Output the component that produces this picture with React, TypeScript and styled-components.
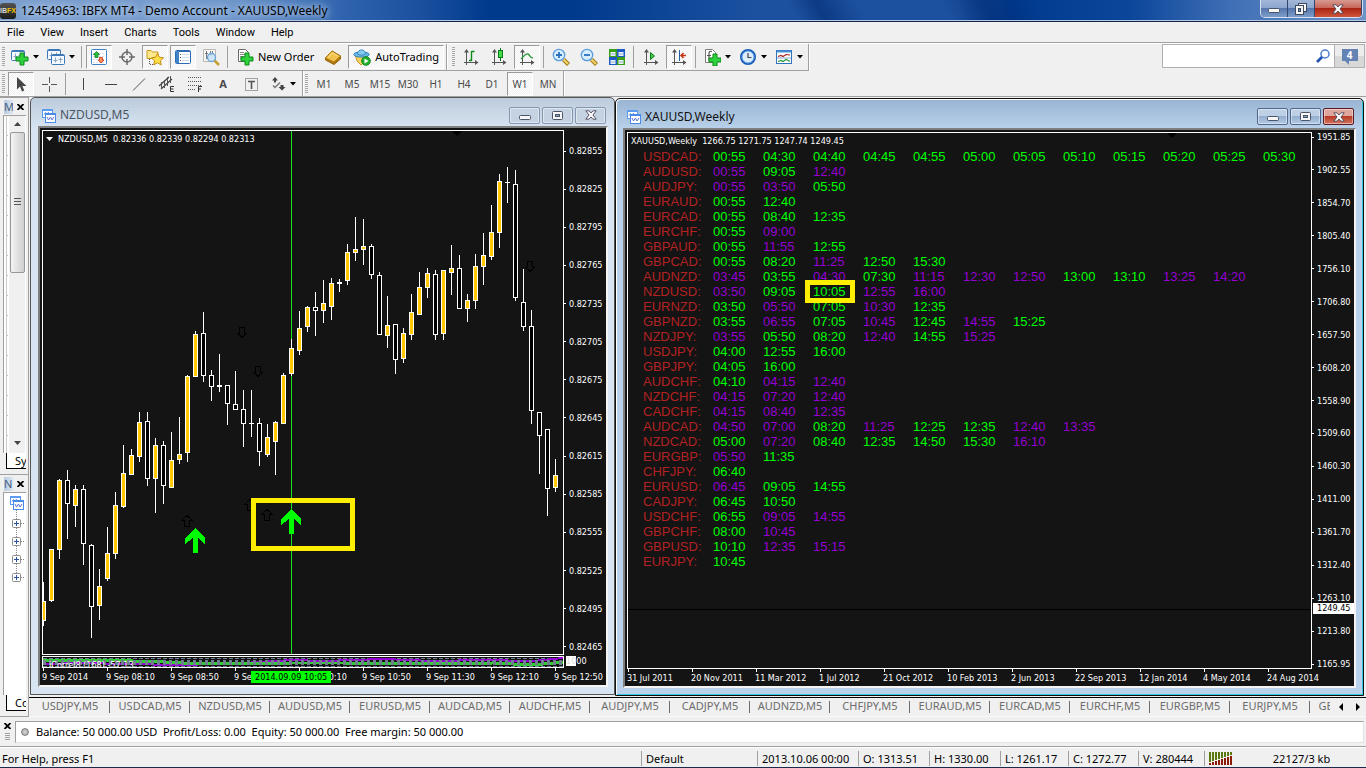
import React from "react";
import styled, { createGlobalStyle, css } from "styled-components";

const UI = `"Noto Sans", "Open Sans", sans-serif`;
const CHART = `"DejaVu Sans Condensed", "DejaVu Sans", sans-serif`;

const Global = createGlobalStyle`
  *, *::before, *::after { box-sizing: border-box; }
  html, body { margin: 0; padding: 0; background: #f0f0f0; overflow: hidden; }
  body { font: 11px/14px ${UI}; color: #000; }
  button { font: inherit; color: inherit; border: 0; background: none; padding: 0; margin: 0; }
  svg { display: block; flex: none; }
`;

const Page = styled.div`
  min-height: 100vh;
  display: flex;
  flex-direction: column;
  overflow: hidden;
`;

/* ---------- title bar and menu ---------- */

const TitleBar = styled.header`
  flex: none;
  height: 22px;
  display: flex;
  align-items: flex-start;
  border-bottom: 1px solid #16264a;
  box-shadow: inset 0 -1px 0 #b4c8e4;
  background:
    linear-gradient(62deg, transparent 58%, rgba(0, 40, 110, 0.55) 60%, transparent 63%, transparent 69%, rgba(0, 40, 110, 0.5) 72%, transparent 76%),
    linear-gradient(90deg, #7b9fce 0, #6f97cb 230px, #2f63ae 345px, #1b509f 420px, #003a8c 490px, #003a8c 570px, #1c51a0 760px, #1c51a0 960px, #003a8e 1010px, #0b469a 1130px, #3f6fb5 1230px, #6c93c8 1366px);
`;
const AppLogo = styled.span`
  flex: none;
  width: 16px;
  height: 16px;
  margin-top: 3px;
  border-radius: 3px;
  background: linear-gradient(#555, #1a1a1a);
  color: #d8d8d8;
  font: bold 7px/15px "Liberation Sans", sans-serif;
  b { color: #f2c400; }
`;
const AppTitle = styled.h1`
  flex: 1;
  margin: 0;
  padding-left: 5px;
  font: 12px/22px ${UI};
  white-space: nowrap;
  text-shadow: 0 0 6px #cfe0f4, 0 0 10px #c3d7f0;
`;
const Caption = styled.div`
  display: flex;
  height: 18px;
  margin-right: 3px;
  border: 1px solid #d5e0f0;
  border-top: 0;
  border-radius: 0 0 5px 5px;
  overflow: hidden;
`;
const CaptionButton = styled.button<{ $close?: boolean }>`
  width: ${(p) => (p.$close ? 47 : 27)}px;
  display: flex;
  align-items: center;
  justify-content: center;
  border-right: 1px solid #33476e;
  background: ${(p) =>
    p.$close
      ? "linear-gradient(#d79a90 0, #c8685a 45%, #a92512 50%, #d0553a)"
      : "linear-gradient(#a3b8d8 0, #8ba6ce 45%, #5577ad 50%, #7d9cc9)"};
`;
const MenuBar = styled.nav`
  flex: none;
  height: 22px;
  display: flex;
  border-bottom: 1px solid #fff;
  box-shadow: inset 0 -1px 0 #a0a0a0;
  font: 11px/20px Roboto, sans-serif;
`;
const MenuItem = styled.button`
  padding: 0 9px 0 7px;
`;

/* ---------- toolbars ---------- */

const ToolRow = styled.div<{ $last?: boolean }>`
  flex: none;
  height: ${(p) => (p.$last ? 26 : 27)}px;
  display: flex;
  ${(p) => p.$last && "border-bottom: 1px solid #a0a0a0;"}
`;
const Group = styled.div<{ $line?: boolean }>`
  display: flex;
  align-items: center;
  padding-right: 1px;
  border-right: 1px solid #a0a0a0;
  box-shadow: 1px 0 0 #fff;
  ${(p) => p.$line && "border-bottom: 1px solid #a0a0a0;"}
`;
const Grip = styled.span<{ $spaced?: boolean }>`
  width: 3px;
  height: 20px;
  margin: 0 2px 0 ${(p) => (p.$spaced ? 5 : 2)}px;
  background: repeating-linear-gradient(#a8a8a8 0 1px, #f0f0f0 1px 2px);
`;
const Divider = styled.span`
  width: 1px;
  height: 22px;
  margin: 0 3px 0 2px;
  background: #a0a0a0;
`;
const Tool = styled.button<{ $on?: boolean; $wide?: boolean; $label?: boolean }>`
  width: ${(p) => (p.$label ? "auto" : p.$wide ? "34px" : "26px")};
  height: 24px;
  margin: 0 1px;
  padding: 0 ${(p) => (p.$label ? 4 : 0)}px;
  display: flex;
  align-items: center;
  justify-content: center;
  gap: 4px;
  color: ${(p) => (p.$label ? "#000" : "#4a4a4a")};
  ${(p) =>
    p.$on &&
    css`
      border: 1px solid;
      border-color: #9a9a9a #fff #fff #9a9a9a;
      background: conic-gradient(#fff 25%, #f0f0f0 0 50%, #fff 0 75%, #f0f0f0 0) 0 0 / 2px 2px;
    `}
`;
const Period = styled(Tool)`
  font: 10px/14px ${UI};
`;
const Search = styled.div`
  display: flex;
  width: 203px;
  height: 24px;
  margin: 0 1px 0 auto;
  border: 1px solid #b0b0b0;
  background: #fff;
  align-items: center;
`;
const SearchInput = styled.input`
  flex: 1;
  min-width: 0;
  height: 22px;
  border: 0;
  outline: 0;
  background: none;
`;
const Messages = styled.button`
  width: 30px;
  height: 22px;
  margin-left: 4px;
  border-left: 1px solid #b0b0b0;
  background: linear-gradient(#ececec 50%, #d8d8d8 50%);
  display: flex;
  align-items: center;
  justify-content: center;
`;
const MessageCount = styled.span`
  position: relative;
  width: 16px;
  height: 12px;
  margin-bottom: 2px;
  background: #6482b4;
  color: #fff;
  font: bold 10px/12px ${UI};
  &::after {
    content: "";
    position: absolute;
    left: 3px;
    top: 12px;
    border: 2px solid transparent;
    border-top-color: #6482b4;
    border-right-color: #6482b4;
  }
`;

/* ---------- docked panels ---------- */

const Main = styled.main`
  flex: 1;
  display: grid;
  grid-template-columns: 29px minmax(0, 1fr);
  min-height: 0;
`;
const Docks = styled.aside`
  display: flex;
  flex-direction: column;
  border-right: 1px solid #a0a0a0;
  border-bottom: 1px solid #a0a0a0;
`;
const Dock = styled.section<{ $grow?: boolean }>`
  display: flex;
  flex-direction: column;
  flex: ${(p) => (p.$grow ? "379 0 0" : "241 0 0")};
  min-height: 0;
  padding: 0 2px 5px 3px;
  border-top: 1px solid #a0a0a0;
`;
const DockHead = styled.div`
  display: flex;
  align-items: center;
  justify-content: space-between;
  height: 17px;
  padding: 0 2px 0 1px;
  color: #44607e;
  span { background: linear-gradient(90deg, #b9cbe0, #dce6f2); width: 9px; overflow: hidden; }
`;
const DockBody = styled.div`
  flex: 1;
  min-height: 0;
  display: flex;
  border: 1px solid #a0a0a0;
  border-right: 0;
  border-bottom: 0;
  background: #fff;
`;
const RowMarks = styled.div`
  width: 4px;
  margin-right: 1px;
  border-left: 2px solid #fff;
  box-shadow: inset 1px 0 0 #c8c8c8;
  background: repeating-linear-gradient(#fff 0 19px, #c0c0c0 19px 20px);
`;
const ScrollBar = styled.div`
  width: 16px;
  display: flex;
  flex-direction: column;
  align-items: center;
  background: #f0f0f0;
  padding: 6px 0 8px;
`;
const Thumb = styled.div`
  width: 15px;
  height: 141px;
  margin: 6px 0 auto;
  display: flex;
  align-items: center;
  justify-content: center;
  border: 1px solid #979797;
  border-radius: 2px;
  background: linear-gradient(90deg, #f4f4f4, #ddd 60%, #cfcfd2);
`;
const DockTab = styled.button`
  height: 16px;
  margin-left: 3px;
  padding-left: 8px;
  text-align: left;
  overflow: hidden;
  white-space: nowrap;
  border: solid #000;
  border-width: 0 0 1px 1px;
  background: #fff;
`;
const Tree = styled.div`
  flex: 1;
  display: flex;
  flex-direction: column;
  align-items: center;
  padding: 2px 0 0 3px;
`;

/* ---------- chart windows ---------- */

const Workspace = styled.div`
  display: flex;
  flex-direction: column;
  min-width: 0;
`;
const Windows = styled.div`
  flex: 1;
  display: grid;
  grid-template-columns: minmax(0, 585fr) minmax(0, 749fr);
  padding: 0 2px 0 1px;
`;
const Win = styled.section<{ $active?: boolean }>`
  display: flex;
  flex-direction: column;
  min-width: 0;
  border: 1px solid ${(p) => (p.$active ? "#111" : "#555")};
  border-radius: 5px 5px 0 0;
  ${(p) =>
    p.$active
      ? css`
          margin: 1px 0;
          padding: 0 7px 7px;
          background: linear-gradient(#98b4d2, #b9d1ea 30px);
          box-shadow: inset 1px 1px 0 #fff, inset -1px -1px 0 #35c8e0;
        `
      : css`
          margin: 0 0 2px;
          padding: 0 6px 7px 7px;
          background: linear-gradient(#bccbda, #d7e4f2 30px);
        `}
`;
const WinTitle = styled.header<{ $active?: boolean }>`
  flex: none;
  height: ${(p) => (p.$active ? 29 : 28)}px;
  display: flex;
  align-items: center;
  gap: 4px;
  padding: 6px 2px 0 3px;
  color: ${(p) => (p.$active ? "#111" : "#4a5563")};
  h2 { flex: 1; margin: 0; font: 12px/20px ${UI}; }
`;
const Buttons = styled.div`
  display: flex;
  gap: 2px;
`;
const WinButton = styled.button<{ $active?: boolean; $close?: boolean }>`
  width: 31px;
  height: 17px;
  display: flex;
  align-items: center;
  justify-content: center;
  border: 1px solid ${(p) => (p.$active && p.$close ? "#5a1a22" : p.$active ? "#51688c" : "#8496b0")};
  border-radius: 2px;
  box-shadow: inset 0 0 0 1px rgba(255, 255, 255, 0.45);
  background: ${(p) =>
    !p.$active
      ? "#c4d2e1"
      : p.$close
        ? "linear-gradient(#e0a59c 48%, #b83a26 50%, #d2755f)"
        : "linear-gradient(#bdd0e6 48%, #94afcf 50%, #b2cae4)"};
`;
const Frame = styled.div<{ $sub?: boolean }>`
  flex: 1;
  display: grid;
  grid-template-columns: minmax(0, 1fr) 42px;
  grid-template-rows: ${(p) => (p.$sub ? "minmax(0, 1fr) 13px 17px" : "minmax(0, 1fr) 17px")};
  border: 2px solid;
  border-color: #7f7f7f #f4f4f4 #f4f4f4 #7f7f7f;
  padding: 2px 0 0 2px;
  background: #141414;
  color: #fff;
  font: 9px/10px ${CHART};
`;
const Plot = styled.div`
  position: relative;
  border: 1px solid #fff;
  overflow: hidden;
`;
const Indicator = styled(Plot)`
  margin-top: 1px;
`;
const Ohlc = styled.p`
  position: absolute;
  top: 3px;
  left: 3px;
  margin: 0;
  display: flex;
  align-items: center;
  gap: 5px;
  white-space: pre;
`;
const Scale = styled.div<{ $inset?: boolean }>`
  position: relative;
  display: flex;
  flex-direction: column;
  justify-content: space-between;
  ${(p) => p.$inset && "padding: 16px 0 3px;"}
`;
const Price = styled.span`
  display: flex;
  align-items: center;
  gap: 3px;
  height: 10px;
  &::before { content: ""; width: 2px; height: 1px; background: #fff; }
`;
const LastPrice = styled.span`
  position: absolute;
  top: 471px;
  left: 1px;
  width: 41px;
  padding-left: 4px;
  line-height: 11px;
  background: #fff;
  color: #000;
`;
const SubScale = styled.div`
  padding: 1px 0 0 2px;
  b { background: #fff; color: #ddd; font-weight: normal; }
`;
const Times = styled.div`
  grid-column: 1 / -1;
  position: relative;
  display: flex;
`;
const Time = styled.span`
  position: relative;
  flex: 0 0 64px;
  padding-top: 4px;
  white-space: nowrap;
  &::before {
    content: "";
    position: absolute;
    left: 1px;
    top: 0;
    width: 1px;
    height: 3px;
    background: #fff;
  }
`;
const CursorTime = styled.span`
  position: absolute;
  left: 209px;
  top: 3px;
  width: 80px;
  line-height: 12px;
  padding-left: 4px;
  white-space: nowrap;
  background: #0f0;
  color: #000;
`;
const Signals = styled.table`
  margin: 16px 0 0 15px;
  border-collapse: collapse;
  table-layout: fixed;
  width: 670px;
  font: 13px/15px "Liberation Sans", Arial, sans-serif;
  th { width: 70px; font-weight: normal; text-align: left; color: #b22222; }
  th, td { padding: 0; height: 15px; white-space: nowrap; }
`;
const SignalTime = styled.td<{ $up: boolean }>`
  color: ${(p) => (p.$up ? "#0f0" : "#9400d3")};
`;
const Mark = styled.span`
  position: relative;
  &::after {
    content: "";
    position: absolute;
    inset: -4px -9px -4px -8px;
    border: 5px solid #fe0;
  }
`;
const BidLine = styled.span`
  position: absolute;
  left: 0;
  right: 0;
  top: 476px;
  height: 1px;
  background: #000;
`;
const TopMarker = styled.span<{ $x: string }>`
  position: absolute;
  top: 0;
  left: ${(p) => p.$x};
  border: 5px solid transparent;
  border-top-color: #000;
  border-bottom: 0;
`;

/* ---------- bottom ---------- */

const Tabs = styled.nav`
  flex: none;
  height: 20px;
  display: flex;
  border-top: 1px solid #000;
  border-bottom: 1px solid #fafafa;
  color: #6d6d6d;
`;
const TabStrip = styled.div`
  flex: 1;
  min-width: 0;
  display: flex;
  margin: 0 2px 0 1px;
  overflow: hidden;
`;
const Tab = styled.button`
  flex: 0 0 80px;
  height: 16px;
  position: relative;
  white-space: nowrap;
  &::after {
    content: "";
    position: absolute;
    right: 0;
    top: 3px;
    height: 12px;
    width: 1px;
    background: #6d6d6d;
  }
`;
const TabArrow = styled.button`
  width: 17px;
  height: 17px;
  display: flex;
  align-items: center;
  justify-content: center;
`;
const Account = styled.section`
  flex: none;
  height: 30px;
  display: flex;
  gap: 3px;
  padding: 4px 2px 3px 3px;
  border-bottom: 1px solid #a0a0a0;
`;
const AccountSide = styled.div`
  width: 9px;
  display: flex;
  flex-direction: column;
  align-items: center;
  gap: 4px;
  padding-top: 2px;
`;
const AccountBox = styled.div`
  flex: 1;
  display: flex;
  align-items: center;
  gap: 7px;
  padding-left: 5px;
  border: 1px solid #a0a0a0;
  border-right-color: #e3e3e3;
  border-bottom-color: #e3e3e3;
  background: #fff;
  white-space: pre;
`;
const Dot = styled.span`
  width: 8px;
  height: 8px;
  border-radius: 4px;
  border: 1px solid #808080;
  background: radial-gradient(circle at 3px 3px, #d8d8d8, #9c9c9c);
`;
const Status = styled.footer`
  flex: none;
  height: 21px;
  display: flex;
  border-top: 1px solid #fff;
  border-bottom: 1px solid #1c2b4c;
  font: 11px/20px ${UI};
  white-space: nowrap;
`;
const Cell = styled.span<{ $w?: number }>`
  ${(p) => (p.$w ? `flex: 0 0 ${p.$w}px;` : "flex: 1; min-width: 0;")}
  display: flex;
  align-items: center;
  position: relative;
  padding: 2px 0 0 ${(p) => (p.$w ? 5 : 2)}px;
  ${(p) =>
    p.$w &&
    css`
      &::before {
        content: "";
        position: absolute;
        left: 0;
        top: 3px;
        bottom: 1px;
        width: 1px;
        background: #a0a0a0;
      }
    `}
`;
const Traffic = styled.span`
  flex: 1;
  text-align: center;
  padding-left: 4px;
`;

/* ---------- icons ---------- */

const Svg = ({ w = 18, h = 18, children }: { w?: number; h?: number; children: React.ReactNode }) => (
  <svg width={w} height={h} viewBox={`0 0 ${w} ${h}`} fill="none" aria-hidden="true">
    {children}
  </svg>
);
const Caret = () => <Svg w={6} h={4}><path d="M0 0h6L3 3.5z" fill="#000" /></Svg>;
const Plus = ({ x, y }: { x: number; y: number }) => (
  <path transform={`translate(${x} ${y})`} d="M4 0h4v4h4v4H8v4H4V8H0V4h4z" fill="#2fd23c" stroke="#0a8a18" />
);
const ChartFrame = ({ x, y }: { x: number; y: number }) => (
  <g transform={`translate(${x} ${y})`}>
    <rect x=".5" y=".5" width="13" height="10" rx="1" fill="#f4faff" stroke="#3c78b8" />
    <path d="M1 1.500h12" stroke="#3c78b8" />
    <path d="M4.500 3.500v5M2.500 6.500h4M9.500 3.500v5M7.500 5.500h4" stroke="#8aa4c0" />
  </g>
);
const Axes = () => (
  <g>
    <path d="M4.500 3v14M2 14.500h12" stroke="#555" />
    <path d="M2 4.500L4.500 1 7 4.500zM13 12l3.500 2.500L13 17z" fill="#555" />
  </g>
);
const WinIcon = () => (
  <Svg w={15} h={15}>
    <rect x="1.500" y="1.500" width="10" height="8" fill="#fff" stroke="#5c9cf0" />
    <path d="M1 2.500h11" stroke="#5c9cf0" />
    <path d="M3 6.500l1.500-2L6 7l1.500-3" stroke="#4f8fe0" />
    <rect x="4.500" y="5.500" width="10" height="9" fill="#fff" stroke="#4a8ae8" />
    <path d="M4 6.500h11" stroke="#4a8ae8" />
    <path d="M6 9l1.500 3L9.500 9l1.500 3L13 9" stroke="#5a74d8" />
  </Svg>
);
const CrossIcon = () => <Svg w={7} h={6}><path d="M.5 0L6.500 6M6.500 0L.5 6" stroke="#000" strokeWidth="1.800" /></Svg>;
const MinGlyph = () => <Svg w={12} h={9}><rect x=".5" y="4.500" width="11" height="4" rx="1" fill="#f6f6f6" stroke="#4a5468" /></Svg>;
const MaxGlyph = () => (
  <Svg w={11} h={9}>
    <rect x=".5" y=".5" width="10" height="8" rx="1" fill="#f6f6f6" stroke="#4a5468" />
    <rect x="3.500" y="3.500" width="4" height="2" fill="#8aa0bc" stroke="#4a5468" />
  </Svg>
);
const RestoreGlyph = () => (
  <Svg w={12} h={12}>
    <rect x="3.500" y=".5" width="8" height="8" fill="#f6f6f6" stroke="#3e4a60" />
    <rect x=".5" y="2.500" width="8" height="9" fill="#f6f6f6" stroke="#3e4a60" />
    <rect x="3.500" y="5.500" width="2" height="3" fill="#6d8ab5" stroke="#3e4a60" />
  </Svg>
);
const CloseGlyph = () => (
  <Svg w={12} h={10}>
    <path d="M.8.8h3.200L6 3 8 .8h3.200L8 5l3.200 4.200H8L6 7 4 9.200H.8L4 5z" fill="#f8f8f8" stroke="#4a4658" strokeWidth=".9" />
  </Svg>
);
const Magnifier = ({ sign }: { sign: string }) => (
  <Svg>
    <path d="M11.500 11.500l5 5" stroke="#9a7410" strokeWidth="4" />
    <path d="M11.500 11.500l4.500 4.500" stroke="#f2d468" strokeWidth="2.200" />
    <circle cx="7" cy="7" r="5.700" fill="#d6eefe" stroke="#5a9cdc" strokeWidth="1.300" />
    <path d={sign} stroke="#2c6fbe" strokeWidth="1.800" />
  </Svg>
);

const icons = {
  newChart: <Svg><ChartFrame x={0} y={2} /><Plus x={5} y={5} /></Svg>,
  profiles: <Svg><ChartFrame x={0} y={1} /><ChartFrame x={4} y={6} /></Svg>,
  market: (
    <Svg>
      <rect x="1.500" y="1.500" width="15" height="15" rx="1" fill="#fff" stroke="#3f82c8" />
      <path d="M3 5.500h12M3 8.500h12M3 11.500h12M3 14.500h12" stroke="#d4e0ec" strokeDasharray="2 1" />
      <path d="M3.500 6.500L6.500 3.500 9.500 6.500H8v3H5v-3z" fill="#30c040" stroke="#0c7c1c" strokeWidth=".8" />
      <path d="M8 12l3 3 3-3h-1.500V9.500h-3V12z" fill="#ff8a60" stroke="#c83818" strokeWidth=".8" />
    </Svg>
  ),
  data: (
    <Svg>
      <circle cx="9" cy="9" r="5" stroke="#6a6a6a" strokeWidth="1.500" />
      <path d="M9 1v6M9 11v6M1 9h6M11 9h6" stroke="#6a6a6a" strokeWidth="1.500" />
    </Svg>
  ),
  navigator: (
    <Svg>
      <path d="M1 2.500h4l1.500 1.500H12v6.500H1z" fill="#ffe98a" stroke="#c8981c" />
      <path d="M3.500 11v5.500H7" stroke="#555" strokeDasharray="1 1" />
      <path d="M11.500 5.500l1.900 3.700 4.100.6-3 2.900.7 4.100-3.700-2-3.700 2 .7-4.100-3-2.900 4.100-.6z" fill="#ffdf45" stroke="#c08a10" />
    </Svg>
  ),
  terminal: (
    <Svg>
      <rect x="1.500" y="2.500" width="15" height="13" rx="1" fill="#fff" stroke="#2d6cb4" />
      <path d="M2 3h3v12H2z" fill="#3e82c8" />
      <path d="M5 3.500h11" stroke="#2d6cb4" />
      <path d="M8 6.500h7M8 9.500h7M8 12.500h7" stroke="#d0dcea" />
      <path d="M6 6.500h1M6 9.500h1M6 12.500h1" stroke="#555" />
    </Svg>
  ),
  tester: (
    <Svg>
      <path d="M1.500 1.500h12v12h-12z" fill="#f7f7f7" stroke="#b8b8b0" />
      <path d="M4.500 3v8M8.500 3v5M3 5.500h3M10.500 3v3" stroke="#777" />
      <path d="M12.500 12.500l4.500 4.500" stroke="#c8a030" strokeWidth="2.500" />
      <circle cx="9.500" cy="9.500" r="4" fill="#c4e2f8" fillOpacity=".85" stroke="#6ca4d8" strokeWidth="1.300" />
    </Svg>
  ),
  order: (
    <Svg>
      <path d="M2.500 1.500h7l3 3v9h-10z" fill="#fff" stroke="#6a6a6a" />
      <path d="M4 4.500h4M4 6.500h6M4 8.500h4M4 10.500h3" stroke="#888" />
      <Plus x={5} y={5} />
    </Svg>
  ),
  book: (
    <Svg>
      <path d="M1.500 10L8 3l8.500 5v3L10 16.500 1.500 12z" fill="#b07810" stroke="#966408" />
      <path d="M1.500 10L8 3l8.500 5-6.500 6z" fill="#f2c24a" stroke="#b07c14" />
      <path d="M4.500 9L8.500 5l5 3" stroke="#fde8a0" />
    </Svg>
  ),
  auto: (
    <Svg>
      <path d="M2.500 8h12l-1.500 5-5 4-4-4z" fill="#f6d060" stroke="#c49a24" />
      <ellipse cx="8.500" cy="6.500" rx="7.800" ry="2.600" fill="#6cb8e8" stroke="#2e80b8" />
      <path d="M4.500 6c0-5.500 8-5.500 8 0-2 1.500-6 1.500-8 0z" fill="#86caf2" stroke="#3a8cc4" />
      <circle cx="13" cy="13" r="4.300" fill="#22b030" stroke="#0f8d1c" />
      <path d="M11.500 10.500l4 2.500-4 2.500z" fill="#fff" />
    </Svg>
  ),
  bars: <Svg><Axes /><path d="M9.500 3v10M12.500 3.500h-3M9.500 12.500H7" stroke="#0a8a1a" strokeWidth="1.400" /></Svg>,
  candles: (
    <Svg>
      <Axes />
      <path d="M10.500 0v13" stroke="#0a7a18" />
      <rect x="8.500" y="2.500" width="4" height="7" fill="#3fdc4c" stroke="#0a7a18" />
    </Svg>
  ),
  line: <Svg><Axes /><path d="M3 11c3-3 5-6 7-5s2 4 5 4" stroke="#2a9a3a" strokeWidth="1.400" /></Svg>,
  zoomIn: <Magnifier sign="M4 7h6M7 4v6" />,
  zoomOut: <Magnifier sign="M4 7h6" />,
  tile: (
    <Svg>
      <path d="M1 1h8v8H1zM9 9h8v8H9z" fill="#38a018" />
      <path d="M9 1h8v8H9zM1 9h8v8H1z" fill="#2058c8" />
      <path d="M2.500 4h5v4h-5zM10.500 4h5v4h-5zM2.500 12h5v4h-5zM10.500 12h5v4h-5z" fill="#e8f2fc" />
      <path d="M3 6h4M11 6h4M3 14h4M11 14h4" stroke="#98b0d0" />
    </Svg>
  ),
  scroll: <Svg><Axes /><path d="M8.500 4.500v7L12.500 8z" fill="#3fcc4c" stroke="#0a7a18" /></Svg>,
  shift: (
    <Svg>
      <Axes />
      <path d="M9.500 2v11" stroke="#2060a0" />
      <path d="M16 7.500h-5M13.500 5L11 7.500l2.500 2.500" stroke="#c83010" strokeWidth="1.500" />
    </Svg>
  ),
  indicators: (
    <Svg>
      <path d="M2.500 1.500h7l3 3v10h-10z" fill="#fff" stroke="#7a7a7a" />
      <path d="M9 3.500c-3-1-3 1-3 3v6M4 7.500h4" stroke="#555" strokeWidth="1.200" />
      <Plus x={6} y={6} />
    </Svg>
  ),
  clock: (
    <Svg>
      <circle cx="9" cy="9" r="7" fill="#dcecfa" stroke="#1a5cb4" strokeWidth="2" />
      <circle cx="9" cy="9" r="6" stroke="#5aa4ec" />
      <path d="M9 5v4.500h3.500" stroke="#444" strokeWidth="1.200" />
    </Svg>
  ),
  template: (
    <Svg>
      <rect x="1.500" y="2.500" width="15" height="13" fill="#fff" stroke="#2f74bc" />
      <path d="M2 3.500h14" stroke="#4a90d8" strokeWidth="2" />
      <path d="M3 8.500l3-1 2 1 3-2 4 .500" stroke="#a82020" strokeWidth="1.200" />
      <path d="M2 10h14" stroke="#88a8c8" />
      <path d="M3 13.500l3-1 2 1 3-2 4 2" stroke="#2a9a3a" strokeWidth="1.200" />
    </Svg>
  ),
  cursor: <Svg><path d="M5 2v12.500l3-3 2 5 2.300-1L10.300 11h4.200z" fill="#454545" /></Svg>,
  cross: <Svg><path d="M9.500 2v6M9.500 11v6M2 9.500h6M11 9.500h6" stroke="#555" /></Svg>,
  vline: <Svg><path d="M9.500 3v12" stroke="#444" /></Svg>,
  hline: <Svg><path d="M3 9.500h12" stroke="#444" /></Svg>,
  trend: <Svg><path d="M3 15.500L15 3.500" stroke="#555" /></Svg>,
  channel: (
    <Svg>
      <path d="M1 11L11 2M3 14L14 4" stroke="#444" strokeWidth="1.200" />
      <path d="M3.500 14V7M6.500 13V5M9.500 11V2M12.500 8V1" stroke="#555" />
      <path d="M16 11.500h-3.500v5H16M12 14h3.500" stroke="#333" />
    </Svg>
  ),
  fibo: (
    <Svg>
      <path d="M2 2.500h14M2 6.500h14M2 10.500h14M2 14.500h8" stroke="#555" strokeDasharray="1 1" />
      <path d="M12.500 17v-5.500H16M12.500 14H15" stroke="#333" />
    </Svg>
  ),
  textBox: (
    <Svg>
      <rect x="3.500" y="3.500" width="12" height="12" stroke="#555" strokeDasharray="1 1" />
      <path d="M6 6.500h7M9.500 6v8" stroke="#555" strokeWidth="1.600" />
    </Svg>
  ),
  arrows: (
    <Svg w={15} h={14}>
      <path d="M4 0l3 3.500h-2v2H3v-2H1z" fill="#444" />
      <path d="M2 8.500l2 2 5-5" stroke="#777" strokeWidth="1.500" />
      <path d="M11 13.500L7.500 10h2V8h3v2h2z" fill="#444" />
    </Svg>
  ),
};

/* ---------- data ---------- */

type Candle = [kind: "u" | "d", high: number, top: number, bottom: number, low: number];

const candles: Candle[] = [
  ["u", 582, 601, 621, 626], ["u", 549, 549, 601, 602], ["u", 479, 480, 550, 559], ["d", 470, 480, 504, 539],
  ["u", 485, 489, 506, 527], ["d", 485, 489, 544, 565], ["d", 544, 545, 607, 638], ["u", 569, 586, 606, 620],
  ["u", 527, 553, 579, 581], ["u", 492, 505, 554, 559], ["u", 445, 473, 507, 508], ["u", 449, 455, 475, 475],
  ["u", 412, 422, 457, 462], ["d", 412, 421, 479, 486], ["u", 438, 445, 479, 513], ["d", 441, 445, 486, 504],
  ["u", 432, 460, 488, 488], ["u", 417, 454, 460, 464], ["u", 375, 376, 453, 462], ["u", 331, 334, 377, 377],
  ["d", 312, 333, 376, 382], ["d", 370, 375, 387, 401], ["d", 354, 385, 387, 392], ["d", 385, 385, 404, 425],
  ["d", 371, 404, 410, 410], ["d", 390, 409, 424, 447], ["d", 390, 423, 424, 437], ["d", 418, 423, 452, 466],
  ["u", 424, 437, 455, 457], ["u", 421, 422, 442, 475], ["u", 373, 375, 424, 424], ["u", 339, 348, 374, 376],
  ["u", 311, 328, 351, 355], ["u", 306, 307, 327, 332], ["d", 292, 307, 311, 336], ["u", 280, 303, 311, 323],
  ["u", 278, 283, 307, 320], ["d", 279, 282, 284, 292], ["u", 244, 252, 281, 285], ["u", 217, 249, 253, 261],
  ["u", 219, 246, 250, 265], ["d", 244, 246, 275, 279], ["d", 272, 275, 335, 335], ["u", 296, 325, 336, 348],
  ["d", 324, 324, 360, 374], ["u", 328, 333, 359, 363], ["u", 294, 312, 335, 340], ["u", 272, 287, 315, 315],
  ["u", 268, 273, 288, 298], ["d", 270, 274, 335, 340], ["u", 270, 270, 334, 340], ["u", 245, 268, 273, 295],
  ["d", 255, 268, 309, 309], ["u", 294, 300, 309, 322], ["u", 254, 266, 301, 309], ["u", 233, 255, 267, 285],
  ["u", 205, 232, 257, 260], ["u", 174, 181, 233, 248], ["d", 167, 182, 183, 203], ["d", 170, 184, 298, 301],
  ["d", 269, 302, 327, 331], ["d", 310, 326, 411, 424], ["d", 412, 412, 436, 474], ["d", 429, 429, 489, 516],
  ["u", 459, 475, 488, 492],
];

const leftPrices = ["0.82855", "0.82825", "0.82795", "0.82765", "0.82735", "0.82705", "0.82675", "0.82645", "0.82615", "0.82585", "0.82555", "0.82525", "0.82495", "0.82465"];
const leftTimes = ["9 Sep 2014", "9 Sep 08:10", "9 Sep 08:50", "9 Sep 09:30", "9 Sep 10:10", "9 Sep 10:50", "9 Sep 11:30", "9 Sep 12:10", "9 Sep 12:50"];
const rightPrices = ["1951.85", "1902.55", "1854.70", "1805.40", "1756.10", "1706.80", "1657.50", "1608.20", "1558.90", "1509.60", "1460.30", "1411.00", "1361.70", "1312.40", "1263.10", "1213.80", "1165.95"];
const rightTimes = ["31 Jul 2011", "20 Nov 2011", "11 Mar 2012", "1 Jul 2012", "21 Oct 2012", "10 Feb 2013", "2 Jun 2013", "22 Sep 2013", "12 Jan 2014", "4 May 2014", "24 Aug 2014"];

/* A leading "+" marks a buy signal, a leading "-" a sell signal. */
const signals: [string, string][] = [
  ["USDCAD", "+00:55 +04:30 +04:40 +04:45 +04:55 +05:00 +05:05 +05:10 +05:15 +05:20 +05:25 +05:30"],
  ["AUDUSD", "-00:55 +09:05 -12:40"],
  ["AUDJPY", "-00:55 -03:50 +05:50"],
  ["EURAUD", "+00:55 +12:40"],
  ["EURCAD", "+00:55 +08:40 +12:35"],
  ["EURCHF", "+00:55 -09:00"],
  ["GBPAUD", "+00:55 -11:55 +12:55"],
  ["GBPCAD", "+00:55 +08:20 -11:25 +12:50 +15:30"],
  ["AUDNZD", "-03:45 +03:55 -04:30 +07:30 -11:15 -12:30 -12:50 +13:00 +13:10 -13:25 -14:20"],
  ["NZDUSD", "-03:50 +09:05 +10:05 -12:55 -16:00"],
  ["EURNZD", "+03:50 -05:50 +07:05 -10:30 +12:35"],
  ["GBPNZD", "+03:55 -06:55 +07:05 -10:45 +12:45 -14:55 +15:25"],
  ["NZDJPY", "-03:55 +05:50 +08:20 -12:40 +14:55 -15:25"],
  ["USDJPY", "+04:00 +12:55 +16:00"],
  ["GBPJPY", "+04:05 +16:00"],
  ["AUDCHF", "+04:10 -04:15 -12:40"],
  ["NZDCHF", "-04:15 -07:20 -12:40"],
  ["CADCHF", "-04:15 -08:40 -12:35"],
  ["AUDCAD", "-04:50 -07:00 +08:20 -11:25 +12:25 +12:35 -12:40 -13:35"],
  ["NZDCAD", "+05:00 -07:20 +08:40 +12:35 +14:50 +15:30 -16:10"],
  ["EURGBP", "-05:50 +11:35"],
  ["CHFJPY", "+06:40"],
  ["EURUSD", "-06:45 +09:05 +14:55"],
  ["CADJPY", "+06:45 +10:50"],
  ["USDCHF", "+06:55 -09:05 -14:55"],
  ["GBPCHF", "+08:00 -10:45"],
  ["GBPUSD", "+10:10 -12:35 -15:15"],
  ["EURJPY", "+10:45"],
];
const tabs = ["USDJPY", "USDCAD", "NZDUSD", "AUDUSD", "EURUSD", "AUDCAD", "AUDCHF", "AUDJPY", "CADJPY", "AUDNZD", "CHFJPY", "EURAUD", "EURCAD", "EURCHF", "EURGBP", "EURJPY", "GBPAUD"];

/* ---------- parts ---------- */

const Ghost = ({ x, y, up }: { x: number; y: number; up?: boolean }) => (
  <path
    transform={`translate(${x} ${y})${up ? " scale(1 -1)" : ""}`}
    d="M-2.500-5h5v6h2.500L0 5.500-5 1h2.500z"
    stroke="#000"
    fill="none"
  />
);
const BuyArrow = ({ x, y }: { x: number; y: number }) => (
  <path transform={`translate(${x} ${y})`} d="M0 0L10 10v6L3 10V25h-5V10l-8 6v-6z" fill="#0f0" />
);

const CandleChart = () => (
  <svg width="520" height="523" viewBox="43 131 520 523" fill="none" shapeRendering="crispEdges" role="img" aria-label="NZDUSD candles">
    <path d="M291.500 131v523" stroke="#1ee01e" />
    <Ghost x={242} y={332} />
    <Ghost x={258} y={371} />
    <Ghost x={530} y={266} />
    <Ghost x={187} y={521} up />
    <Ghost x={250} y={505} up />
    <Ghost x={267} y={515} up />
    {candles.map(([kind, high, top, bottom, low], i) => {
      const x = 43 + i * 8;
      return (
        <g key={i}>
          <rect x={x} y={high} width={1} height={low - high} fill="#fff" />
          <rect x={x - 2} y={top} width={5} height={bottom - top} fill="#fff" />
          {bottom - top > 2 && (
            <rect x={x - 1} y={top + 1} width={3} height={bottom - top - 2} fill={kind === "u" ? "#ffc800" : "#000"} />
          )}
        </g>
      );
    })}
    <BuyArrow x={195} y={528} />
    <BuyArrow x={291} y={509} />
    <rect x="253.500" y="500.500" width="99" height="48" stroke="#fe0" strokeWidth="5" />
  </svg>
);

const IndicatorChart = () => (
  <svg width="520" height="10" viewBox="0 0 520 10" fill="none" shapeRendering="crispEdges">
    <path d="M0 1.500h520M0 9.500h520" stroke="#708090" strokeDasharray="4 2" />
    <path d="M0 7l40-1 40 1 60 1 60-2 50-3 30 1 60-2 50 2 50-1 50 1 30-3 20 4 20 2" stroke="#9400d3" strokeWidth="2" />
    <path d="M0 3l60 0 60 2 40 2 90-1 50 0 90 1 60-1 40 2 30-3h12" stroke="#32cd32" strokeWidth="3" />
    <path d="M0 5h520" stroke="#708090" strokeWidth="5" strokeDasharray="3 3" />
    <text x="6" y="11" fill="#fff" fontSize="9" fontFamily="DejaVu Sans Condensed, DejaVu Sans, sans-serif">
      iCorrel8 (168) -57.13
    </text>
  </svg>
);

const WindowHead = ({ title, active }: { title: string; active?: boolean }) => (
  <WinTitle $active={active}>
    <WinIcon />
    <h2>{title}</h2>
    <Buttons>
      <WinButton $active={active} aria-label="Minimize"><MinGlyph /></WinButton>
      <WinButton $active={active} aria-label="Maximize"><MaxGlyph /></WinButton>
      <WinButton $active={active} $close aria-label="Close"><CloseGlyph /></WinButton>
    </Buttons>
  </WinTitle>
);

const ToolIcon = ({ name, on, menu }: { name: keyof typeof icons; on?: boolean; menu?: boolean }) => (
  <Tool $on={on} $wide={menu} aria-label={name}>
    {icons[name]}
    {menu && <Caret />}
  </Tool>
);

export default function App() {
  return (
    <Page>
      <Global />
      <TitleBar>
        <AppLogo>IB<b>FX</b></AppLogo>
        <AppTitle>12454963: IBFX MT4 - Demo Account - XAUUSD,Weekly</AppTitle>
        <Caption>
          <CaptionButton aria-label="Minimize"><MinGlyph /></CaptionButton>
          <CaptionButton aria-label="Restore"><RestoreGlyph /></CaptionButton>
          <CaptionButton $close aria-label="Close"><CloseGlyph /></CaptionButton>
        </Caption>
      </TitleBar>
      <MenuBar>
        {["File", "View", "Insert", "Charts", "Tools", "Window", "Help"].map((m) => (
          <MenuItem key={m}>{m}</MenuItem>
        ))}
      </MenuBar>

      <ToolRow>
        <Group $line>
          <Grip />
          <ToolIcon name="newChart" menu />
          <ToolIcon name="profiles" menu />
          <Divider />
          <ToolIcon name="market" on />
          <ToolIcon name="data" />
          <ToolIcon name="navigator" on />
          <ToolIcon name="terminal" on />
          <ToolIcon name="tester" />
          <Divider />
          <Tool $label>{icons.order}New Order</Tool>
          <ToolIcon name="book" />
          <Tool $label $on>{icons.auto}AutoTrading</Tool>
        </Group>
        <Group $line>
          <Grip $spaced />
          <ToolIcon name="bars" />
          <ToolIcon name="candles" />
          <ToolIcon name="line" on />
          <Divider />
          <ToolIcon name="zoomIn" />
          <ToolIcon name="zoomOut" />
          <ToolIcon name="tile" />
          <Divider />
          <ToolIcon name="scroll" />
          <ToolIcon name="shift" on />
          <Divider />
          <ToolIcon name="indicators" menu />
          <ToolIcon name="clock" menu />
          <ToolIcon name="template" menu />
        </Group>
        <Search>
          <SearchInput aria-label="Search" />
          <Svg w={14} h={14}>
            <circle cx="9" cy="5" r="4" stroke="#4a7cd0" strokeWidth="1.500" />
            <path d="M6 8l-5 5" stroke="#1f50b0" strokeWidth="2.600" />
          </Svg>
          <Messages aria-label="Messages"><MessageCount>4</MessageCount></Messages>
        </Search>
      </ToolRow>
      <ToolRow $last>
        <Group>
          <Grip />
          <ToolIcon name="cursor" on />
          <ToolIcon name="cross" />
          <Divider />
          <ToolIcon name="vline" />
          <ToolIcon name="hline" />
          <ToolIcon name="trend" />
          <ToolIcon name="channel" />
          <ToolIcon name="fibo" />
          <Tool><b>A</b></Tool>
          <ToolIcon name="textBox" />
          <ToolIcon name="arrows" menu />
        </Group>
        <Group>
          <Grip />
          {["M1", "M5", "M15", "M30", "H1", "H4", "D1", "W1", "MN"].map((p) => (
            <Period key={p} $on={p === "W1"}>{p}</Period>
          ))}
        </Group>
      </ToolRow>

      <Main>
        <Docks>
          <Dock $grow>
            <DockHead><span>M</span><CrossIcon /></DockHead>
            <DockBody>
              <RowMarks />
              <ScrollBar>
                <Svg w={7} h={4}><path d="M0 4h7L3.500 0z" fill="#444" /></Svg>
                <Thumb><Svg w={7} h={9}><path d="M0 .5h7M0 3.500h7M0 6.500h7" stroke="#555" /></Svg></Thumb>
                <Svg w={7} h={4}><path d="M0 0h7L3.500 4z" fill="#444" /></Svg>
              </ScrollBar>
            </DockBody>
            <DockTab>Symbols</DockTab>
          </Dock>
          <Dock>
            <DockHead><span>N</span><CrossIcon /></DockHead>
            <DockBody>
              <Tree>
                <WinIcon />
                <Svg w={15} h={80}>
                  <path d="M7.500 0v68M12 13.500h3M12 31.500h3M12 49.500h3M12 67.500h3" stroke="#888" strokeDasharray="1 1" />
                  {[9, 27, 45, 63].map((y) => (
                    <g key={y}>
                      <rect x="3.500" y={y + 0.5} width="8" height="8" rx="1" fill="#fff" stroke="#8c8c8c" />
                      <path d={`M5 ${y + 4.5}h5M7.500 ${y + 2}v5`} stroke="#2c50a0" />
                    </g>
                  ))}
                </Svg>
              </Tree>
            </DockBody>
            <DockTab>Common</DockTab>
          </Dock>
        </Docks>

        <Workspace>
          <Windows>
            <Win>
              <WindowHead title="NZDUSD,M5" />
              <Frame $sub>
                <Plot>
                  <CandleChart />
                  <Ohlc>
                    <Svg w={7} h={4}><path d="M0 0h7L3.500 4z" fill="#fff" /></Svg>
                    {"NZDUSD,M5  0.82336 0.82339 0.82294 0.82313"}
                  </Ohlc>
                  <TopMarker $x="409px" />
                </Plot>
                <Scale $inset>{leftPrices.map((p) => <Price key={p}>{p}</Price>)}</Scale>
                <Indicator><IndicatorChart /></Indicator>
                <SubScale><b>10</b>00</SubScale>
                <Times>
                  {leftTimes.map((t) => <Time key={t}>{t}</Time>)}
                  <CursorTime>2014.09.09 10:05</CursorTime>
                </Times>
              </Frame>
            </Win>
            <Win $active>
              <WindowHead title="XAUUSD,Weekly" active />
              <Frame>
                <Plot>
                  <Ohlc>{"XAUUSD,Weekly  1266.75 1271.75 1247.74 1249.45"}</Ohlc>
                  <TopMarker $x="539px" />
                  <BidLine />
                  <Signals>
                    <tbody>
                      {signals.map(([pair, list]) => {
                        const times = list.split(" ");
                        return (
                          <tr key={pair}>
                            <th scope="row">{pair}:</th>
                            {Array.from({ length: 12 }, (_, i) => {
                              const t = times[i];
                              if (!t) return <td key={i} />;
                              const marked = pair === "NZDUSD" && i === 2;
                              return (
                                <SignalTime key={i} $up={t[0] === "+"}>
                                  {marked ? <Mark>{t.slice(1)}</Mark> : t.slice(1)}
                                </SignalTime>
                              );
                            })}
                          </tr>
                        );
                      })}
                    </tbody>
                  </Signals>
                </Plot>
                <Scale>
                  {rightPrices.map((p) => <Price key={p}>{p}</Price>)}
                  <LastPrice>1249.45</LastPrice>
                </Scale>
                <Times>{rightTimes.map((t) => <Time key={t}>{t}</Time>)}</Times>
              </Frame>
            </Win>
          </Windows>
          <Tabs>
            <TabStrip>{tabs.map((t) => <Tab key={t}>{t},M5</Tab>)}</TabStrip>
            <TabArrow aria-label="Scroll left"><Svg w={4} h={8}><path d="M4 0v8L0 4z" fill="#000" /></Svg></TabArrow>
            <TabArrow aria-label="Scroll right"><Svg w={4} h={8}><path d="M0 0v8l4-4z" fill="#000" /></Svg></TabArrow>
          </Tabs>
        </Workspace>
      </Main>

      <Account>
        <AccountSide>
          <CrossIcon />
          <Svg w={5} h={8}><path d="M0 .5h5M0 2.500h5M0 4.500h5M0 6.500h5" stroke="#a0a0a0" /></Svg>
        </AccountSide>
        <AccountBox>
          <Dot />
          {"Balance: 50 000.00 USD  Profit/Loss: 0.00  Equity: 50 000.00  Free margin: 50 000.00"}
        </AccountBox>
      </Account>
      <Status>
        <Cell>For Help, press F1</Cell>
        <Cell $w={116}>Default</Cell>
        <Cell $w={101}>2013.10.06 00:00</Cell>
        <Cell $w={71}>O: 1313.51</Cell>
        <Cell $w={71}>H: 1330.00</Cell>
        <Cell $w={68}>L: 1261.17</Cell>
        <Cell $w={70}>C: 1272.77</Cell>
        <Cell $w={66}>V: 280444</Cell>
        <Cell $w={162}>
          <Svg w={24} h={13}>
            {[0, 1, 2, 3, 4, 5, 6, 7].map((i) => (
              <g key={i}>
                <rect x={i * 3} y={0} width={2} height={10 - i} fill="#5a7a10" />
                <rect x={i * 3} y={11 - i} width={2} height={2 + i} fill="#8c1a08" />
              </g>
            ))}
          </Svg>
          <Traffic>22127/3 kb</Traffic>
        </Cell>
      </Status>
    </Page>
  );
}
